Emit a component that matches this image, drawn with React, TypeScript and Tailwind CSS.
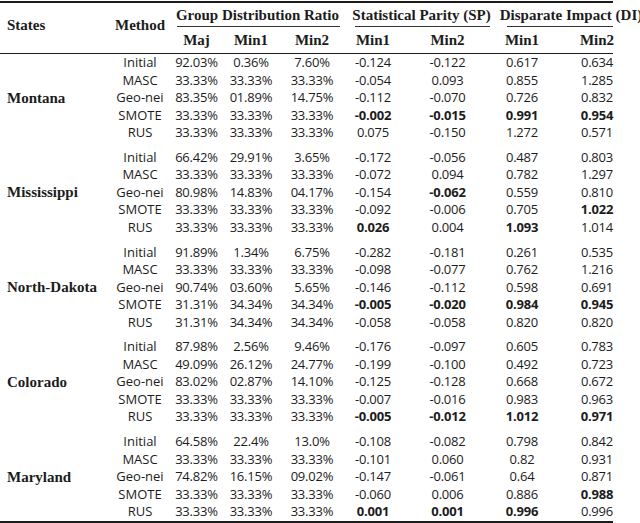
import React from "react";

type Cell = string | { v: string; b: true };

interface Group {
    state: string;
    rows: { method: string; cells: Cell[] }[];
}

const B = (v: string): Cell => ({ v, b: true });

const groups: Group[] = [
    {
        state: "Montana",
        rows: [
            { method: "Initial", cells: ["92.03%", "0.36%", "7.60%", "-0.124", "-0.122", "0.617", "0.634"] },
            { method: "MASC", cells: ["33.33%", "33.33%", "33.33%", "-0.054", "0.093", "0.855", "1.285"] },
            { method: "Geo-nei", cells: ["83.35%", "01.89%", "14.75%", "-0.112", "-0.070", "0.726", "0.832"] },
            { method: "SMOTE", cells: ["33.33%", "33.33%", "33.33%", B("-0.002"), B("-0.015"), B("0.991"), B("0.954")] },
            { method: "RUS", cells: ["33.33%", "33.33%", "33.33%", "0.075", "-0.150", "1.272", "0.571"] },
        ],
    },
    {
        state: "Mississippi",
        rows: [
            { method: "Initial", cells: ["66.42%", "29.91%", "3.65%", "-0.172", "-0.056", "0.487", "0.803"] },
            { method: "MASC", cells: ["33.33%", "33.33%", "33.33%", "-0.072", "0.094", "0.782", "1.297"] },
            { method: "Geo-nei", cells: ["80.98%", "14.83%", "04.17%", "-0.154", B("-0.062"), "0.559", "0.810"] },
            { method: "SMOTE", cells: ["33.33%", "33.33%", "33.33%", "-0.092", "-0.006", "0.705", B("1.022")] },
            { method: "RUS", cells: ["33.33%", "33.33%", "33.33%", B("0.026"), "0.004", B("1.093"), "1.014"] },
        ],
    },
    {
        state: "North-Dakota",
        rows: [
            { method: "Initial", cells: ["91.89%", "1.34%", "6.75%", "-0.282", "-0.181", "0.261", "0.535"] },
            { method: "MASC", cells: ["33.33%", "33.33%", "33.33%", "-0.098", "-0.077", "0.762", "1.216"] },
            { method: "Geo-nei", cells: ["90.74%", "03.60%", "5.65%", "-0.146", "-0.112", "0.598", "0.691"] },
            { method: "SMOTE", cells: ["31.31%", "34.34%", "34.34%", B("-0.005"), B("-0.020"), B("0.984"), B("0.945")] },
            { method: "RUS", cells: ["31.31%", "34.34%", "34.34%", "-0.058", "-0.058", "0.820", "0.820"] },
        ],
    },
    {
        state: "Colorado",
        rows: [
            { method: "Initial", cells: ["87.98%", "2.56%", "9.46%", "-0.176", "-0.097", "0.605", "0.783"] },
            { method: "MASC", cells: ["49.09%", "26.12%", "24.77%", "-0.199", "-0.100", "0.492", "0.723"] },
            { method: "Geo-nei", cells: ["83.02%", "02.87%", "14.10%", "-0.125", "-0.128", "0.668", "0.672"] },
            { method: "SMOTE", cells: ["33.33%", "33.33%", "33.33%", "-0.007", "-0.016", "0.983", "0.963"] },
            { method: "RUS", cells: ["33.33%", "33.33%", "33.33%", B("-0.005"), B("-0.012"), B("1.012"), B("0.971")] },
        ],
    },
    {
        state: "Maryland",
        rows: [
            { method: "Initial", cells: ["64.58%", "22.4%", "13.0%", "-0.108", "-0.082", "0.798", "0.842"] },
            { method: "MASC", cells: ["33.33%", "33.33%", "33.33%", "-0.101", "0.060", "0.82", "0.931"] },
            { method: "Geo-nei", cells: ["74.82%", "16.15%", "09.02%", "-0.147", "-0.061", "0.64", "0.871"] },
            { method: "SMOTE", cells: ["33.33%", "33.33%", "33.33%", "-0.060", "0.006", "0.886", B("0.988")] },
            { method: "RUS", cells: ["33.33%", "33.33%", "33.33%", B("0.001"), B("0.001"), B("0.996"), "0.996"] },
        ],
    },
];

const serif = "font-['Liberation_Serif',serif]";
const sans = "font-['Open_Sans',sans-serif]";

const GroupRows: React.FC<{ group: Group; first: boolean }> = ({ group, first }) => (
    <div
        className={`grid grid-cols-[112px_56px_57px_52px_70px_52px_97px_52px_98px] grid-rows-[repeat(5,17.5px)] ${first ? "" : "mt-[7.25px]"}`}
    >
        <div className={`row-span-5 col-start-1 row-start-1 flex items-center pl-[7px] text-[15px] font-bold ${serif}`}>
            {group.state}
        </div>
        {group.rows.map((row, i) => (
            <React.Fragment key={i}>
                <div className={`col-start-2 flex items-center justify-center text-[13px] ${sans}`} style={{ gridRowStart: i + 1 }}>
                    {row.method}
                </div>
                {row.cells.map((c, j) => {
                    const bold = typeof c !== "string";
                    return (
                        <div
                            key={j}
                            className={`flex items-center justify-center text-[13px] tracking-[-0.2px] ${sans} ${bold ? "font-bold" : ""}`}
                            style={{ gridRowStart: i + 1, gridColumnStart: j + 3 }}
                        >
                            {typeof c === "string" ? c : c.v}
                        </div>
                    );
                })}
            </React.Fragment>
        ))}
    </div>
);

export default function App() {
    return (
        <div className="w-[640px] h-[523px] overflow-hidden bg-white text-[#1c1c1c]">
            <div className="w-[646px]">
                <div className="mt-[1px] h-[2px] w-[613px] bg-[#1c1c1c]" />
                <div className={`grid grid-cols-[112px_56px_57px_52px_70px_52px_97px_52px_98px] grid-rows-[23px_1px_26px] text-[15px] font-bold ${serif}`}>
                    <div className="col-start-1 row-start-1 row-span-3 flex items-center pl-[7px] pb-[6px]">States</div>
                    <div className="col-start-2 row-start-1 row-span-3 flex items-center justify-center pb-[6px]">Method</div>
                    <div className="col-start-3 col-span-3 row-start-1 flex items-center justify-center pt-[2px]">Group Distribution Ratio</div>
                    <div className="col-start-6 col-span-2 row-start-1 flex items-center justify-center pt-[2px]">Statistical Parity (SP)</div>
                    <div className="col-start-8 col-span-2 row-start-1 flex items-center justify-center pt-[2px] whitespace-nowrap">Disparate Impact (DI)</div>
                    <div className="col-start-3 col-span-3 row-start-2 ml-[9px] mr-[7px] bg-[#333]" />
                    <div className="col-start-6 col-span-2 row-start-2 ml-[8px] mr-[6px] bg-[#333]" />
                    <div className="col-start-8 col-span-2 row-start-2 ml-[11px] mr-[33px] bg-[#333]" />
                    <div className="col-start-3 row-start-3 flex items-center justify-center">Maj</div>
                    <div className="col-start-4 row-start-3 flex items-center justify-center">Min1</div>
                    <div className="col-start-5 row-start-3 flex items-center justify-center">Min2</div>
                    <div className="col-start-6 row-start-3 flex items-center justify-center">Min1</div>
                    <div className="col-start-7 row-start-3 flex items-center justify-center">Min2</div>
                    <div className="col-start-8 row-start-3 flex items-center justify-center">Min1</div>
                    <div className="col-start-9 row-start-3 flex items-center justify-center">Min2</div>
                </div>
                <div className="h-[1px] w-[613px] bg-[#1c1c1c]" />
                {groups.map((g, i) => (
                    <GroupRows key={g.state} group={g} first={i === 0} />
                ))}
                <div className="h-[2px] w-[613px] bg-[#1c1c1c]" />
            </div>
        </div>
    );
}
